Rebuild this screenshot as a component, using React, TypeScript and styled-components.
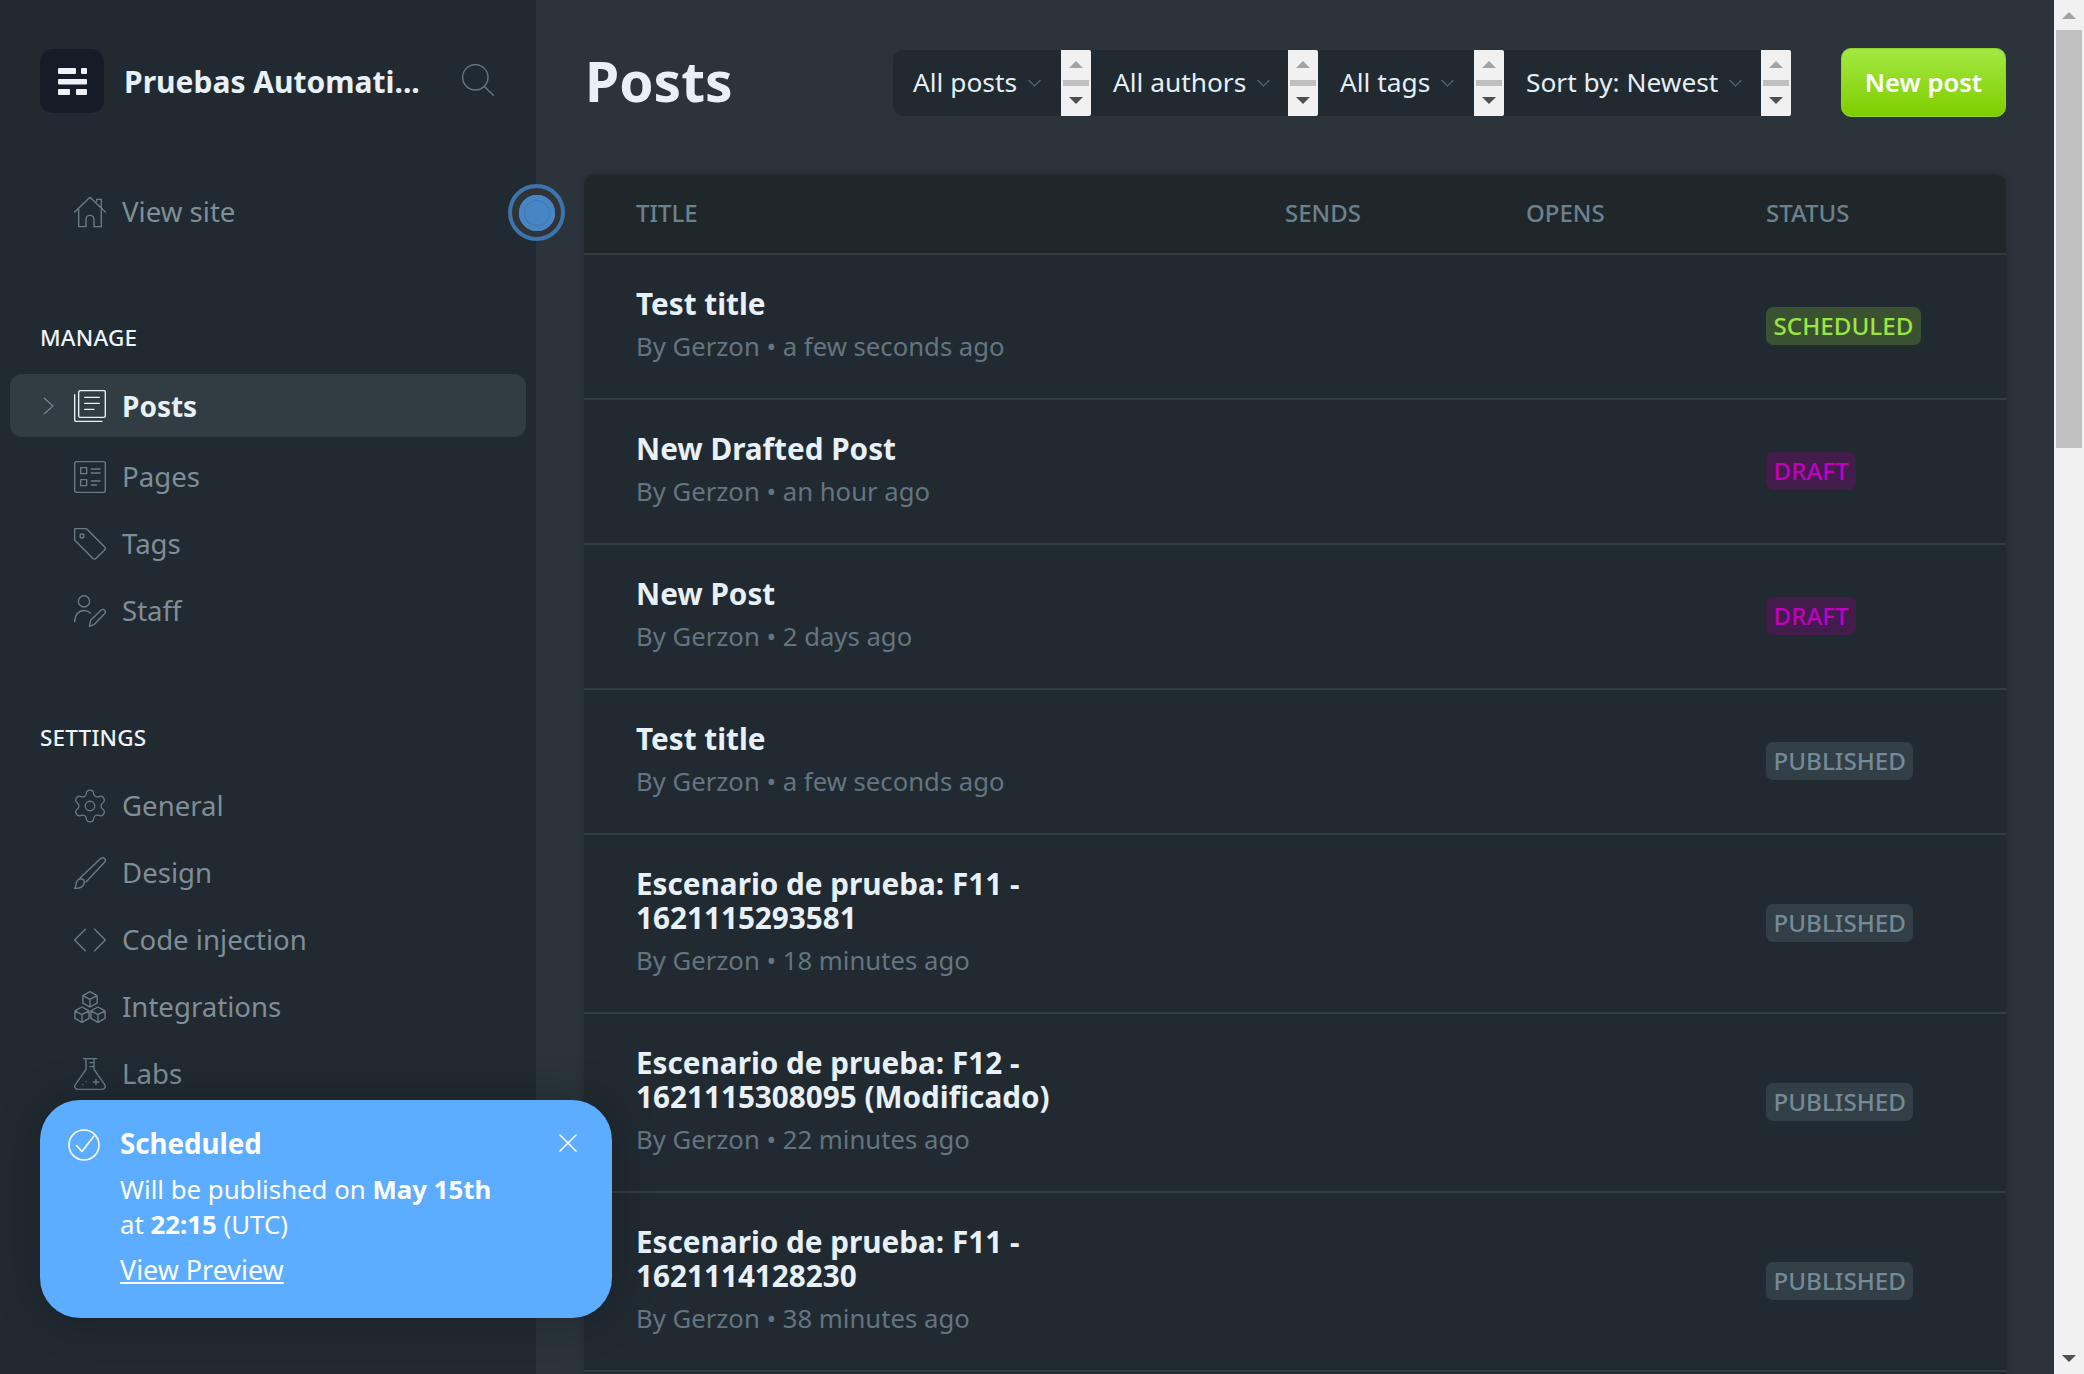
import styled, { createGlobalStyle } from "styled-components";
import { Settings } from "lucide-react";
import type { ReactNode } from "react";

const GlobalStyle = createGlobalStyle`
  html, body {
    margin: 0;
    height: 100%;
    background: #2a343a;
    font-family: "Noto Sans", "Open Sans", sans-serif;
    overflow: hidden;
  }
  * { box-sizing: border-box; }
`;

const Shell = styled.div`
  position: relative;
  display: flex;
  width: 100%;
  height: 100vh;
  overflow: hidden;
`;

const Sidebar = styled.aside`
  flex: 0 0 536px;
  padding-top: 49px;
  background: #212a31;
`;

const Brand = styled.div`
  display: flex;
  align-items: center;
  height: 64px;
  padding: 0 42px 0 40px;
  margin-bottom: 65px;
`;

const LogoBox = styled.div`
  display: flex;
  align-items: center;
  justify-content: center;
  width: 64px;
  height: 64px;
  border-radius: 13px;
  background: #151c27;
`;

const BrandName = styled.div`
  flex: 1;
  margin-left: 20px;
  font-size: 30px;
  font-weight: 700;
  color: #e8f0f8;
  white-space: nowrap;
`;

const SectionLabel = styled.div<{ $top: number; $bottom: number }>`
  height: 30px;
  line-height: 30px;
  margin: ${(p) => p.$top}px 0 ${(p) => p.$bottom}px 40px;
  font-size: 22.5px;
  font-weight: 500;
  letter-spacing: 0.2px;
  color: #eef4fa;
`;

const NavItem = styled.div<{ $active?: boolean }>`
  display: flex;
  align-items: center;
  height: ${(p) => (p.$active ? "63px" : "67px")};
  margin: 0 10px ${(p) => (p.$active ? "6px" : "0")};
  padding-left: 33px;
  border-radius: 12px;
  background: ${(p) => (p.$active ? "#323d43" : "transparent")};
  color: ${(p) => (p.$active ? "#e8f0f8" : "#7f8e96")};
  font-size: ${(p) => (p.$active ? "28px" : "27.6px")};
  font-weight: ${(p) => (p.$active ? 700 : 400)};
`;

const NavLabel = styled.span<{ $active?: boolean }>`
  margin-bottom: ${(p) => (p.$active ? "0" : "2px")};
`;

const CaretSlot = styled.span`
  display: flex;
  width: 31px;
`;

const NavIcon = styled.span<{ $active?: boolean }>`
  display: flex;
  width: 32px;
  height: 32px;
  margin-right: 16px;
  color: ${(p) => (p.$active ? "#e8f0f8" : "#6a7b84")};
`;

const Glyph = styled.svg.attrs({
  viewBox: "0 0 24 24",
  fill: "none",
  stroke: "currentColor",
  strokeWidth: 1.05,
  strokeLinecap: "round",
  strokeLinejoin: "round",
})`
  display: block;
  width: 32px;
  height: 32px;
`;

const GearGlyph = styled(Settings)`
  display: block;
  width: 38px;
  height: 38px;
  margin: -3px;
  flex: none;
`;

const SearchGlyph = styled(Glyph)`
  margin-bottom: 2px;
  color: #66777f;
`;

const FocusDot = styled.div`
  position: absolute;
  left: 508px;
  top: 184px;
  width: 57px;
  height: 57px;
  border: 4px solid #3c74ad;
  border-radius: 50%;
  background: #303438;
  display: flex;
  align-items: center;
  justify-content: center;
`;

const FocusInner = styled.div`
  width: 36px;
  height: 36px;
  border-radius: 50%;
  background: #4785c4;
  box-shadow: inset 0 0 0 5px #4785c4, inset 0 0 0 6px #3f78b2;
`;

const Main = styled.main`
  flex: 1;
  display: flex;
  flex-direction: column;
  min-width: 0;
  padding: 48px 48px 0;
  background: #2a343a;
`;

const Header = styled.header`
  display: flex;
  align-items: center;
  height: 69px;
  margin-bottom: 57px;
`;

const PageTitle = styled.h1`
  flex: 1;
  margin: 0 0 4px 1px;
  font-size: 55px;
  font-weight: 700;
  color: #e8f0f8;
`;

const Filters = styled.div`
  display: flex;
  margin-right: 50px;
  margin-top: 1px;
`;

const Filter = styled.div<{ $width: number; $first?: boolean }>`
  display: flex;
  align-items: center;
  width: ${(p) => p.$width}px;
  height: 66px;
  padding-left: ${(p) => (p.$first ? 20 : 22)}px;
  background: #212a31;
  border-radius: ${(p) => (p.$first ? "10px 0 0 10px" : "0")};
  font-size: 26.3px;
  color: #e5eff6;
  white-space: nowrap;
`;

const FilterLabel = styled.span`
  margin-bottom: 2px;
`;

const FilterCaret = styled.svg.attrs({
  viewBox: "0 0 13 8",
  fill: "none",
  stroke: "#55656d",
  strokeWidth: 1.2,
})`
  width: 13px;
  height: 8px;
  margin-left: 11px;
`;

const Spinner = styled.div`
  display: flex;
  flex-direction: column;
  align-items: center;
  justify-content: space-between;
  width: 30px;
  height: 66px;
  margin-left: auto;
  padding: 11px 0 12px;
  background: #f1f1f1;
  border-radius: 0 2px 2px 0;
`;

const ArrowUp = styled.span`
  width: 0;
  height: 0;
  border-left: 7px solid transparent;
  border-right: 7px solid transparent;
  border-bottom: 7px solid #a3a3a3;
`;

const ArrowDown = styled.span`
  width: 0;
  height: 0;
  border-left: 7px solid transparent;
  border-right: 7px solid transparent;
  border-top: 7px solid #505050;
`;

const SpinnerBar = styled.span`
  width: 26px;
  height: 6px;
  background: #c0c0c0;
`;

const NewPost = styled.button`
  width: 165px;
  height: 69px;
  padding: 0;
  border: 1px solid #8fd62a;
  border-radius: 10px;
  background: linear-gradient(#a2e842, #80ce00);
  font-family: inherit;
  font-size: 25.6px;
  font-weight: 600;
  color: #fff;
`;

const Table = styled.section`
  flex: 1;
  border-radius: 12px 12px 0 0;
  background: #212a31;
  box-shadow: 0 0 6px rgba(20, 26, 30, 0.35);
`;

const Columns = styled.div`
  display: grid;
  grid-template-columns: 649px 241px 240px 1fr;
  padding-left: 52px;
`;

const HeadRow = styled(Columns)`
  align-items: center;
  height: 81px;
  padding-bottom: 3px;
  border-bottom: 2px solid #323c43;
  border-radius: 12px 12px 0 0;
  background: #1f272b;
  font-size: 24px;
  font-weight: 500;
  color: #6c818e;
`;

const Row = styled(Columns)`
  align-items: center;
  padding-top: 32px;
  padding-bottom: 34px;
  border-bottom: 2px solid #323c43;
`;

const RowTitle = styled.div`
  width: 440px;
  font-size: 29.7px;
  line-height: 34px;
  font-weight: 700;
  color: #e8f0f8;
`;

const RowMeta = styled.div`
  margin-top: 9px;
  font-size: 25.7px;
  line-height: 34px;
  color: #64757f;
`;

const Cell = styled.div`
  grid-column: 4;
`;

type Tone = "scheduled" | "draft" | "published";

const toneColors: Record<Tone, [string, string]> = {
  scheduled: ["#3a5232", "#9be53f"],
  draft: ["#421c4a", "#c000c4"],
  published: ["#323f46", "#748a96"],
};

const Badge = styled.span<{ $tone: Tone }>`
  display: inline-flex;
  align-items: center;
  height: 38px;
  padding: 0 7.5px;
  border-radius: 7px;
  background: ${(p) => toneColors[p.$tone][0]};
  color: ${(p) => toneColors[p.$tone][1]};
  font-size: 24.2px;
  font-weight: 500;
`;

const PageScroll = styled.div`
  flex: 0 0 30px;
  display: flex;
  flex-direction: column;
  align-items: center;
  padding-bottom: 12px;
  background: #f1f1f1;
`;

const ScrollTop = styled.div`
  display: flex;
  align-items: center;
  justify-content: center;
  height: 30px;
`;

const Thumb = styled.div`
  width: 26px;
  height: 418px;
  margin-bottom: auto;
  background: #c0c0c0;
`;

const Toast = styled.div`
  position: absolute;
  left: 40px;
  top: 1100px;
  display: flex;
  width: 572px;
  height: 218px;
  padding: 26px 35px 0 28px;
  border-radius: 40px;
  background: #5cadff;
  color: #fff;
  box-shadow: 0 0 40px rgba(15, 20, 24, 0.35);
`;

const ToastIcon = styled.svg.attrs({
  viewBox: "0 0 32 32",
  fill: "none",
  stroke: "#fff",
  strokeWidth: 1.6,
  strokeLinecap: "round",
  strokeLinejoin: "round",
})`
  flex: none;
  width: 32px;
  height: 36px;
  margin: -1px 20px 0 0;
`;

const ToastBody = styled.div`
  flex: 1;
`;

const ToastTitle = styled.div`
  font-size: 27.7px;
  line-height: 34px;
  font-weight: 700;
`;

const ToastText = styled.div`
  margin-top: 12px;
  font-size: 25.8px;
  line-height: 35px;
  b { font-weight: 700; }
`;

const ToastLink = styled.a`
  display: inline-block;
  margin-top: 10px;
  font-size: 26.9px;
  line-height: 35px;
  color: #fff;
  text-decoration: underline;
`;

const ToastClose = styled.svg.attrs({
  viewBox: "0 0 18 18",
  fill: "none",
  stroke: "#fff",
  strokeWidth: 1.6,
  strokeLinecap: "round",
})`
  flex: none;
  width: 18px;
  height: 18px;
  margin-top: 8px;
`;

const Cube = ({ x, y }: { x: number; y: number }) => (
  <path
    d={`M${x} ${y - 5.7}l5.3 2.9v5.7l-5.3 2.9-5.3-2.9v-5.7zM${x - 5.3} ${y - 2.8}l5.3 2.9 5.300-2.9M${x} ${y + 0.1}v5.600`}
  />
);

const icons: Record<string, ReactNode> = {
  home: (
    <Glyph>
      <path d="M.5 12 12 1l11.5 11M3.5 10v13h5.5v-5.5a3 3 0 0 1 6 0V23h5.5V10M17 4V2.5h3.5V9" />
    </Glyph>
  ),
  posts: (
    <Glyph>
      <rect x="3.5" y=".5" width="20" height="20" rx="1.2" />
      <path d="M.5 3.5v18.8c0 .7.5 1.2 1.2 1.2H21M8 5.5h11M8 10h11M8 14.5h7" />
    </Glyph>
  ),
  pages: (
    <Glyph>
      <rect x=".5" y=".5" width="23" height="23" rx="1.5" />
      <path d="M5 5h4.5v4.5H5zM5 14h4.5v4.5H5zM13 6h6.5M13 9h6.5M13 15h6.5M13 18h4" />
    </Glyph>
  ),
  tags: (
    <Glyph>
      <path d="M1 .5h7.4c.6 0 1.2.2 1.6.7l13 13.1c.6.6.6 1.6 0 2.2l-6.6 6.4c-.6.6-1.6.6-2.2 0L1.2 9.8C.7 9.4.5 8.8.5 8.2V1c0-.3.2-.5.5-.5z" />
      <circle cx="6" cy="6" r="1.5" />
    </Glyph>
  ),
  staff: (
    <Glyph>
      <circle cx="7.5" cy="4.8" r="4.2" />
      <path d="M.5 20c0-5 3-8.4 7-8.4 2 0 3.6.7 4.8 2M11.5 23.5l1-4.5 7.7-7.6c.8-.8 2.1-.8 2.8 0 .7.7.6 1.9-.1 2.7L15.3 22z" />
    </Glyph>
  ),
  general: <GearGlyph strokeWidth={0.8} />,
  design: (
    <Glyph>
      <path d="M.5 23.5c1-1 1-3.500 1.500-5s2.500-2.500 4-2c1.500.5 2 2 1.500 3.500-1 3-4.500 3.500-7 3.500zM4.500 15.800 20 1.200c.8-.8 2.200-.8 3 0 .7.8.6 2-.1 2.800L9 18.800" />
    </Glyph>
  ),
  code: (
    <Glyph>
      <path d="M8.500 4 .5 12l8 8M15.500 4l8 8-8 8" />
    </Glyph>
  ),
  integrations: (
    <Glyph>
      <Cube x={12} y={6.200} />
      <Cube x={6} y={17.700} />
      <Cube x={18} y={17.700} />
    </Glyph>
  ),
  labs: (
    <Glyph>
      <path d="M7 .5h10M9 .5v8L1 20c-1.100 1.700 0 3.500 2 3.500h18c2 0 3.100-1.800 2-3.500L15 8.500V.5M15 3.500h-3M15 6.500h-3M6.500 20h.01M9 17.500h.01M14.500 18h4M16.500 16v4" />
    </Glyph>
  ),
};

const Item = ({ icon, label, active }: { icon: string; label: string; active?: boolean }) => (
  <NavItem $active={active}>
    <CaretSlot>
      {active && (
        <svg width="11" height="18" viewBox="0 0 11 18" fill="none" stroke="#75858d" strokeWidth="1.200">
          <path d="M1 1l9 8-9 8" />
        </svg>
      )}
    </CaretSlot>
    <NavIcon $active={active}>{icons[icon]}</NavIcon>
    <NavLabel $active={active}>{label}</NavLabel>
  </NavItem>
);

const FilterBox = ({ label, width, first }: { label: string; width: number; first?: boolean }) => (
  <Filter $width={width} $first={first}>
    <FilterLabel>{label}</FilterLabel>
    <FilterCaret>
      <path d="M.5 1 6.500 7l6-6" />
    </FilterCaret>
    <Spinner>
      <ArrowUp />
      <SpinnerBar />
      <ArrowDown />
    </Spinner>
  </Filter>
);

type Post = { title: string; by: string; tone: Tone };

const posts: Post[] = [
  { title: "Test title", by: "a few seconds ago", tone: "scheduled" },
  { title: "New Drafted Post", by: "an hour ago", tone: "draft" },
  { title: "New Post", by: "2 days ago", tone: "draft" },
  { title: "Test title", by: "a few seconds ago", tone: "published" },
  { title: "Escenario de prueba: F11 - 1621115293581", by: "18 minutes ago", tone: "published" },
  { title: "Escenario de prueba: F12 - 1621115308095 (Modificado)", by: "22 minutes ago", tone: "published" },
  { title: "Escenario de prueba: F11 - 1621114128230", by: "38 minutes ago", tone: "published" },
];

export default function App() {
  return (
    <Shell>
      <GlobalStyle />
      <Sidebar>
        <Brand>
          <LogoBox>
            <svg width="29" height="27" viewBox="0 0 29 27" fill="#eef2f8">
              <rect x="0" y="0" width="18" height="6" rx="1" />
              <rect x="23" y="0" width="6" height="6" rx="1" />
              <rect x="0" y="11" width="29" height="5.500" rx="1" />
              <rect x="0" y="21" width="12" height="6" rx="1" />
              <rect x="18" y="21" width="11" height="6" rx="1" />
            </svg>
          </LogoBox>
          <BrandName>Pruebas Automati...</BrandName>
          <SearchGlyph>
            <circle cx="10" cy="10" r="9.500" />
            <path d="m16.800 16.800 6.700 6.700" />
          </SearchGlyph>
        </Brand>
        <Item icon="home" label="View site" />
        <SectionLabel $top={78} $bottom={21}>MANAGE</SectionLabel>
        <Item icon="posts" label="Posts" active />
        <Item icon="pages" label="Pages" />
        <Item icon="tags" label="Tags" />
        <Item icon="staff" label="Staff" />
        <SectionLabel $top={79} $bottom={19}>SETTINGS</SectionLabel>
        <Item icon="general" label="General" />
        <Item icon="design" label="Design" />
        <Item icon="code" label="Code injection" />
        <Item icon="integrations" label="Integrations" />
        <Item icon="labs" label="Labs" />
      </Sidebar>
      <Main>
        <Header>
          <PageTitle>Posts</PageTitle>
          <Filters>
            <FilterBox label="All posts" width={198} first />
            <FilterBox label="All authors" width={227} />
            <FilterBox label="All tags" width={186} />
            <FilterBox label="Sort by: Newest" width={287} />
          </Filters>
          <NewPost>New post</NewPost>
        </Header>
        <Table>
          <HeadRow>
            <span>TITLE</span>
            <span>SENDS</span>
            <span>OPENS</span>
            <span>STATUS</span>
          </HeadRow>
          {posts.map((post, i) => (
            <Row key={i}>
              <div>
                <RowTitle>{post.title}</RowTitle>
                <RowMeta>By Gerzon • {post.by}</RowMeta>
              </div>
              <Cell>
                <Badge $tone={post.tone}>{post.tone.toUpperCase()}</Badge>
              </Cell>
            </Row>
          ))}
        </Table>
      </Main>
      <PageScroll>
        <ScrollTop>
          <ArrowUp />
        </ScrollTop>
        <Thumb />
        <ArrowDown />
      </PageScroll>
      <FocusDot>
        <FocusInner />
      </FocusDot>
      <Toast>
        <ToastIcon>
          <circle cx="16" cy="18" r="15" />
          <path d="M8.500 18.500 14 24.500 26 9" />
        </ToastIcon>
        <ToastBody>
          <ToastTitle>Scheduled</ToastTitle>
          <ToastText>
            Will be published on <b>May 15th</b>
            <br />
            at <b>22:15</b> (UTC)
          </ToastText>
          <ToastLink href="#">View Preview</ToastLink>
        </ToastBody>
        <ToastClose>
          <path d="M1 1l16 16M17 1 1 17" />
        </ToastClose>
      </Toast>
    </Shell>
  );
}
